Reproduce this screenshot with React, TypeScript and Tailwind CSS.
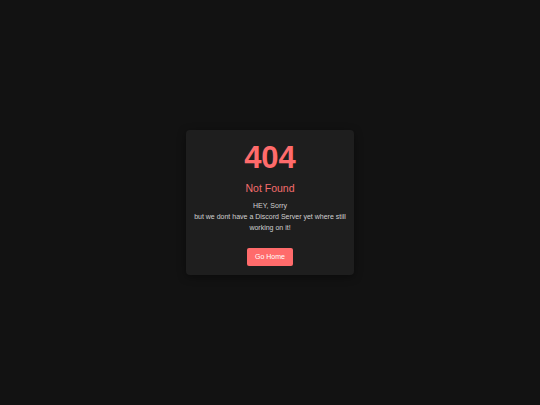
import React from "react";

const NotFound: React.FC = () => {
  return (
    <div
      className="flex min-h-screen items-center justify-center bg-[#121212]"
      style={{ fontFamily: '"Liberation Sans", Arial, sans-serif' }}
    >
      <div className="flex w-[168px] flex-col items-center rounded-[4px] bg-[#1e1e1e] px-[6px] pt-[12px] pb-[9px] text-center shadow-[0_2px_8px_rgba(0,0,0,0.4)]">
        <h1 className="text-[31px] leading-[32px] font-bold text-[#ff6b6b]">404</h1>
        <h2 className="mt-[7px] text-[10.5px] leading-[14px] text-[#f46d6d]">Not Found</h2>
        <p className="mt-[5px] text-[7px] leading-[11px] whitespace-nowrap text-[#d0d0d0]">
          HEY, Sorry
          <br />
          but we dont have a Discord Server yet where still
          <br />
          working on it!
        </p>
        <button className="mt-[15px] h-[18px] w-[46px] rounded-[2px] bg-[#ff6b6b] text-[7px] text-white">
          Go Home
        </button>
      </div>
    </div>
  );
};

export default function App() {
  return <NotFound />;
}
